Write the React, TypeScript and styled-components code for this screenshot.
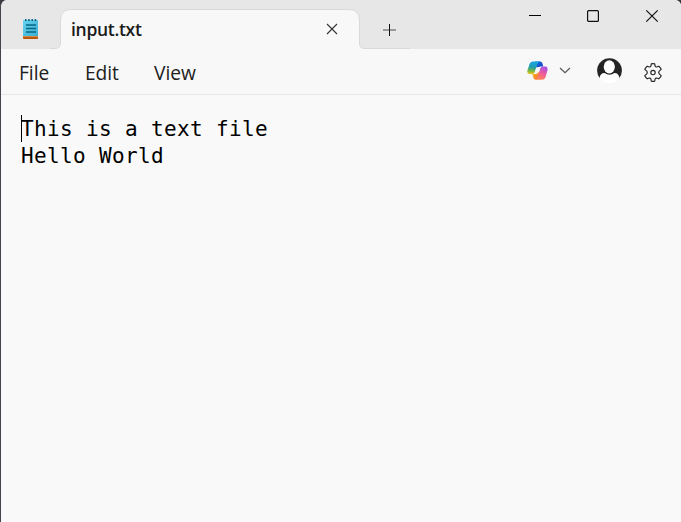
import React from "react";
import styled, { createGlobalStyle } from "styled-components";

const GlobalStyle = createGlobalStyle`
  *, *::before, *::after { box-sizing: border-box; }
  html, body { margin: 0; padding: 0; overflow: hidden; background: #3b3941; }
`;

const Window = styled.div`
  display: flex;
  flex-direction: column;
  width: 681px;
  height: 522px;
  border-left: 1px solid #45434b;
  border-radius: 7px 6px 0 0;
  overflow: hidden;
  background: #f9f9f9;
  color: #1b1b1b;
  font-family: "Open Sans", "Noto Sans", sans-serif;
`;

const TitleBar = styled.header`
  display: flex;
  flex: none;
  height: 49px;
  background: #e7e7e7;
`;

const AppIcon = styled.div`
  width: 49px;
  padding: 18px 0 0 21px;
  line-height: 0;
`;

const TabShape = styled.div`
  position: relative;
  width: 361px;
  height: 49px;
`;

const TabOutline = styled.svg`
  position: absolute;
  inset: 0;
`;

const TabContent = styled.div`
  position: relative;
  display: flex;
  align-items: center;
  justify-content: space-between;
  width: 288px;
  height: 38px;
  margin-top: 10px;
  padding-left: 21px;
`;

const TabTitle = styled.span`
  font-size: 17.5px;
  line-height: 24px;
  font-weight: 600;
  letter-spacing: -0.3px;
`;

const NewTab = styled.button`
  position: absolute;
  left: 332px;
  top: 23px;
  width: 14px;
  height: 14px;
  padding: 0;
  border: 0;
  background: none;
  line-height: 0;
`;

const CaptionButtons = styled.div`
  display: flex;
  align-items: flex-start;
  margin-left: auto;
  padding: 9px 22px 0 0;
  gap: 45px;
`;

const IconButton = styled.button`
  display: block;
  padding: 0;
  border: 0;
  background: none;
  line-height: 0;
`;

const MenuBar = styled.nav`
  display: flex;
  flex: none;
  height: 46px;
  padding: 0 19px 0 18px;
  background: #f8f8f8;
  border-bottom: 1px solid #e6e6e6;
`;

const MenuItem = styled.button<{ $width: number }>`
  width: ${(p) => p.$width}px;
  padding: 0;
  border: 0;
  background: none;
  color: #202020;
  font: 400 19.2px/46px "Open Sans", "Noto Sans", sans-serif;
  letter-spacing: -0.05px;
  text-align: left;
  height: 47px;
`;

const Tools = styled.div`
  display: flex;
  align-items: center;
  height: 42px;
  margin-left: auto;
`;

const Tool = styled.button<{ $gap?: number; $drop?: number }>`
  display: block;
  margin: ${(p) => p.$drop ?? 0}px 0 0 ${(p) => p.$gap ?? 0}px;
  padding: 0;
  border: 0;
  background: none;
  line-height: 0;
`;

const Editor = styled.main`
  flex: 1;
  padding: 20px 20px 0;
`;

const Line = styled.div`
  display: flex;
  height: 27px;
  color: #000;
  font: 400 21px/29px "DejaVu Sans Mono", monospace;
  letter-spacing: 0.36px;
  white-space: pre;
`;

const Caret = styled.span`
  width: 1px;
  height: 27px;
  margin-right: -1px;
  background: #000;
`;

const NotepadIcon = () => (
  <svg width="16" height="22" viewBox="0 0 16 22">
    <defs>
      <linearGradient id="page" x1="0" y1="0" x2="1" y2="1">
        <stop offset="0" stopColor="#65d3ee" />
        <stop offset="1" stopColor="#3daed2" />
      </linearGradient>
    </defs>
    <path d="M1 17H16V20Q16 21 15 21H2Q1 21 1 20Z" fill="#b85508" />
    <path d="M1 18.6H16" stroke="#e8b887" strokeWidth="0.6" />
    <rect x="1" y="2" width="15" height="16" rx="0.6" fill="url(#page)" />
    <path d="M3.8 1V3M7 1V3M10.2 1V3M13.4 1V3" stroke="#086080" strokeWidth="1.5" />
    <path d="M4 7H14M4 10.5H14M4 14H14" stroke="#056787" strokeWidth="1.6" />
  </svg>
);

const CopilotIcon = () => (
  <svg width="21" height="19" viewBox="0 0 21 19">
    <defs>
      <linearGradient id="cpLeft" x1="0.3" y1="0" x2="0.2" y2="1">
        <stop offset="0" stopColor="#16a5e8" />
        <stop offset="0.45" stopColor="#249eac" />
        <stop offset="0.75" stopColor="#79b83d" />
        <stop offset="1" stopColor="#efc51b" />
      </linearGradient>
      <linearGradient id="cpTop" x1="0" y1="0" x2="1" y2="0.6">
        <stop offset="0" stopColor="#1670dd" />
        <stop offset="1" stopColor="#1646c8" />
      </linearGradient>
      <linearGradient id="cpRight" x1="0.7" y1="0" x2="0.3" y2="1">
        <stop offset="0" stopColor="#a850e8" />
        <stop offset="0.5" stopColor="#ee5d9b" />
        <stop offset="1" stopColor="#ff8850" />
      </linearGradient>
      <linearGradient id="cpBottom" x1="0" y1="0" x2="1" y2="1">
        <stop offset="0" stopColor="#fac21b" />
        <stop offset="1" stopColor="#f36439" />
      </linearGradient>
    </defs>
    <path d="M8 0.4H13.2Q14.8 0.4 15.3 2L16.3 5.4H13.5Q11.8 5.4 11 7.2L9 6Z" fill="url(#cpTop)" />
    <path d="M5.3 13H7.6Q8.8 13 9.6 11L12.4 11.5L12 15Q10.8 18.7 8.8 18.7Q7 18.7 6.3 16.5Z" fill="url(#cpBottom)" />
    <path d="M5.6 0.4H13Q11 1 10.4 3L7.6 11.4Q7 13 5 13H2.6Q-0.4 13 0.5 9.3L2.5 3Q3.4 0.4 5.6 0.4Z" fill="url(#cpLeft)" />
    <path d="M15.4 18.7H8.4Q10 18.2 10.7 16L13.3 7.2Q14 5.4 16 5.4H18.2Q21.2 5.4 20.5 9.2L18.6 15.9Q17.8 18.7 15.4 18.7Z" fill="url(#cpRight)" />
    <path d="M7.6 12.2L9.2 7.4Q9.8 6 11.5 6H13L11.2 11Q10.5 13 9 13H7.2Z" fill="#f8f8f8" />
  </svg>
);

const AccountIcon = () => (
  <svg width="26" height="25" viewBox="0 0 26 25">
    <path d="M3.2 20.8A12.4 12.4 0 1 1 21.8 20.8Z" fill="#242424" />
    <ellipse cx="12.3" cy="8.8" rx="5.6" ry="6.6" fill="#fff" />
    <path d="M2.6 20Q3.3 15 7.5 15Q12.5 18.6 17.5 15Q21.7 15 22.4 20V20.8Q18.5 25 12.5 25Q6.5 25 2.6 20.8Z" fill="#fff" />
  </svg>
);

const GearIcon = () => (
  <svg width="18" height="19" viewBox="0 0 18 19" fill="none" stroke="#262626" strokeWidth="1.15" strokeLinejoin="round">
    <path d="M7.3 0.9Q9 0.5 10.7 0.9L11.1 3.1Q11.5 4 12.5 4L14.8 3.2Q16.4 4.5 17.2 6.3L15.5 7.9Q14 9.5 15.5 11.1L17.2 12.7Q16.4 14.6 14.8 15.8L12.5 15Q11.5 15 11.1 15.9L10.7 18.1Q9 18.5 7.3 18.1L6.9 15.9Q6.5 15 5.5 15L3.2 15.8Q1.6 14.6 0.8 12.7L2.5 11.1Q4 9.5 2.5 7.9L0.8 6.3Q1.6 4.5 3.2 3.2L5.5 4Q6.5 4 6.9 3.1Z" />
    <circle cx="9" cy="9.5" r="2.2" />
  </svg>
);

export default function App() {
  return (
    <>
      <GlobalStyle />
      <Window>
        <TitleBar>
          <AppIcon><NotepadIcon /></AppIcon>
          <TabShape>
            <TabOutline width="361" height="49" fill="none">
              <path d="M0 49Q10.5 49 10.5 43V20Q10.5 9.5 21 9.5H299Q309.5 9.5 309.5 20V43Q309.5 49 316 49Z" fill="#f8f8f8" />
              <path d="M0 48.5H5Q10.5 48.5 10.5 43V20Q10.5 9.5 21 9.5H299Q309.5 9.5 309.5 20V43Q309.5 48.5 315 48.5H360" stroke="#d9d9d9" />
            </TabOutline>
            <TabContent>
              <TabTitle>input.txt</TabTitle>
              <IconButton aria-label="Close tab">
                <svg width="12" height="12" viewBox="0 0 12 12" stroke="#333" strokeWidth="1.1"><path d="M1 1L11 11M11 1L1 11" /></svg>
              </IconButton>
            </TabContent>
            <NewTab aria-label="New tab">
              <svg width="14" height="14" viewBox="0 0 14 14"><path d="M1 7H14" stroke="#888" strokeWidth="1.6" /><path d="M7.5 1V13" stroke="#111" /></svg>
            </NewTab>
          </TabShape>
          <CaptionButtons>
            <IconButton aria-label="Minimize">
              <svg width="14" height="14" viewBox="0 0 14 14"><path d="M2 6.5H14" stroke="#000" /></svg>
            </IconButton>
            <IconButton aria-label="Maximize">
              <svg width="14" height="14" viewBox="0 0 14 14"><rect x="1.6" y="1.6" width="10.8" height="10.8" rx="1" fill="none" stroke="#111" strokeWidth="1.2" /></svg>
            </IconButton>
            <IconButton aria-label="Close window">
              <svg width="14" height="14" viewBox="0 0 14 14"><path d="M1.3 1.3L12.7 12.7M12.7 1.3L1.3 12.7" stroke="#111" strokeWidth="1.2" /></svg>
            </IconButton>
          </CaptionButtons>
        </TitleBar>
        <MenuBar>
          <MenuItem $width={66}>File</MenuItem>
          <MenuItem $width={69}>Edit</MenuItem>
          <MenuItem $width={60}>View</MenuItem>
          <Tools>
            <Tool aria-label="Copilot"><CopilotIcon /></Tool>
            <Tool aria-label="Copilot options" $gap={11}>
              <svg width="12" height="7" viewBox="0 0 12 7" fill="none" stroke="#555" strokeWidth="1.2"><path d="M1 1L6 5.7L11 1" /></svg>
            </Tool>
            <Tool aria-label="Account" $gap={26}><AccountIcon /></Tool>
            <Tool aria-label="Settings" $gap={21} $drop={4}><GearIcon /></Tool>
          </Tools>
        </MenuBar>
        <Editor>
          <Line><Caret />This is a text file</Line>
          <Line>Hello World</Line>
        </Editor>
      </Window>
    </>
  );
}
